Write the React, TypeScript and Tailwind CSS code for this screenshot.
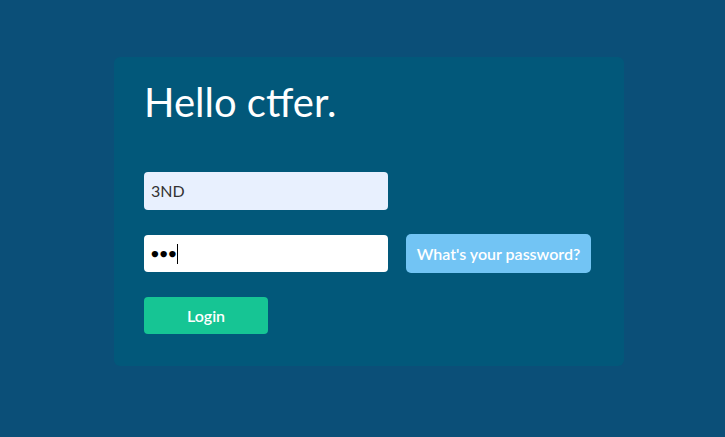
import React from "react";

export default function App() {
  return (
    <div
      className="w-[725px] h-[437px] bg-[#0b4f78] pt-[57px] pl-[114px]"
      style={{ fontFamily: "Lato, 'Noto Sans', sans-serif" }}
    >
      <div className="w-[510px] h-[309px] bg-[#02587a] rounded-[6px] pl-[30px] pt-[20px]">
        <h1 className="text-[40px] leading-[50px] text-white font-normal">Hello ctfer.</h1>
        <div className="mt-[45px] flex flex-col gap-[24px]">
          <div className="w-[244px] h-[38px] bg-[#e8f0fe] rounded-[4px] flex items-center pl-[7px] text-[16px] text-[#333]">
            3ND
          </div>
          <div className="flex items-center gap-[18px]">
            <div className="w-[244px] h-[37px] bg-white rounded-[4px] flex items-center pl-[7px] text-[#000]">
              <span className="text-[13px] tracking-[1px]">●●●</span>
              <span className="w-[1px] h-[20px] bg-black ml-[0px]" />
            </div>
            <button className="h-[39px] w-[185px] bg-[#72c4f4] rounded-[5px] text-white text-[16px] font-semibold">
              What's your password?
            </button>
          </div>
          <button className="w-[124px] h-[37px] bg-[#16c594] rounded-[4px] text-white text-[16px] font-semibold">
            Login
          </button>
        </div>
      </div>
    </div>
  );
}
